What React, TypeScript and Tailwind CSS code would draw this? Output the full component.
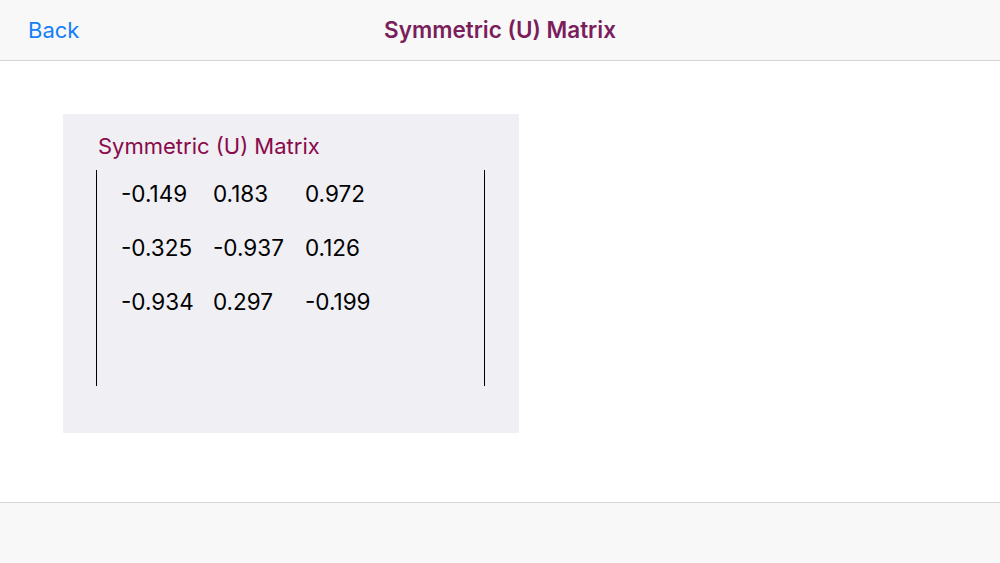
const rows = [
  ['-0.149', '0.183', '0.972'],
  ['-0.325', '-0.937', '0.126'],
  ['-0.934', '0.297', '-0.199'],
];

export default function App() {
  return (
    <div
      className="w-[1000px] h-[563px] flex flex-col bg-white overflow-hidden"
      style={{ fontFamily: 'Inter, "Noto Sans", sans-serif' }}
    >
      <header className="relative h-[61px] shrink-0 flex items-center justify-center bg-[#f8f8f8] border-b border-[#d6d6d6]">
        <button className="absolute left-[28px] top-[16px] text-[22px] text-[#147efb] leading-[28px]">Back</button>
        <h1 className="text-[22.5px] font-semibold text-[#7a1e5c] leading-[28px]">Symmetric (U) Matrix</h1>
      </header>

      <main className="flex-1 pt-[53px] pl-[63px]">
        <div className="w-[456px] h-[319px] bg-[#efeff4] pt-[20px] pl-[33px]">
          <h2 className="text-[22px] text-[#8a0a4a] leading-[24px] ml-[2px]">Symmetric (U) Matrix</h2>
          <div className="mt-[12px] w-[389px] h-[216px] flex border-l-[1.5px] border-r-[1.5px] border-black">
            <div className="pl-[24px] pt-[12px] flex flex-col gap-[30px]">
              {rows.map((r, i) => (
                <div key={i} className="flex text-[22.5px] text-black leading-[24px]">
                  {r.map((v, j) => (
                    <span key={j} className="w-[92px]">{v}</span>
                  ))}
                </div>
              ))}
            </div>
          </div>
        </div>
      </main>

      <footer className="h-[61px] shrink-0 bg-[#f8f8f8] border-t border-[#d6d6d6]" />
    </div>
  );
}
